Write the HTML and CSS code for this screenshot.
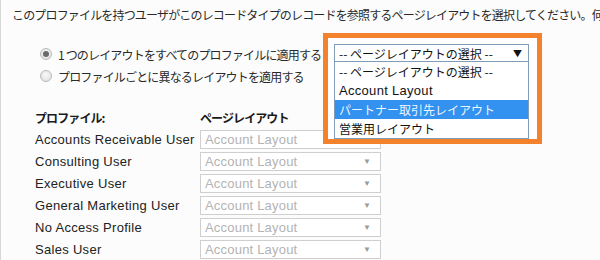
FILE: index.html
```html
<!DOCTYPE html>
<html lang="ja">
<head>
<meta charset="utf-8">
<link rel="stylesheet" href="styles.css">
</head>
<body>
<div class="page">
  <p class="intro">このプロファイルを持つユーザがこのレコードタイプのレコードを参照するページレイアウトを選択してください。何も選択しない場合は</p>

  <div class="choices">
    <div class="choice"><span class="radio checked"></span><span>1 つのレイアウトをすべてのプロファイルに適用する</span></div>
    <div class="choice"><span class="radio"></span><span>プロファイルごとに異なるレイアウトを適用する</span></div>
  </div>

  <div class="grid">
    <div class="head">プロファイル:</div>
    <div class="head">ページレイアウト</div>

    <div class="label">Accounts Receivable User</div>
    <div class="sel"><span>Account Layout</span><span class="arr">▼</span></div>
    <div class="label">Consulting User</div>
    <div class="sel"><span>Account Layout</span><span class="arr">▼</span></div>
    <div class="label">Executive User</div>
    <div class="sel"><span>Account Layout</span><span class="arr">▼</span></div>
    <div class="label">General Marketing User</div>
    <div class="sel"><span>Account Layout</span><span class="arr">▼</span></div>
    <div class="label">No Access Profile</div>
    <div class="sel"><span>Account Layout</span><span class="arr">▼</span></div>
    <div class="label">Sales User</div>
    <div class="sel"><span>Account Layout</span><span class="arr">▼</span></div>
  </div>

  <div class="dropdown">
    <div class="closed"><span>-- ページレイアウトの選択 --</span><span class="arr-dark">▼</span></div>
    <ul class="list">
      <li>-- ページレイアウトの選択 --</li>
      <li class="latin">Account Layout</li>
      <li class="active">パートナー取引先レイアウト</li>
      <li>営業用レイアウト</li>
    </ul>
  </div>
</div>
</body>
</html>
```

FILE: styles.css
```css
* { box-sizing: border-box; }
html, body { margin: 0; padding: 0; }
body {
  width: 600px;
  height: 260px;
  overflow: hidden;
  background: #fcfcfc;
  font-family: "Liberation Sans", "Noto Sans CJK JP", sans-serif;
  color: #222;
}
.page {
  position: relative;
  height: 260px;
  border-left: 1px solid #d8d8d8;
  padding: 6px 0 0 11px;
}
.intro {
  margin: 0;
  font-family: "Noto Sans CJK JP", sans-serif;
  font-size: 12px;
  letter-spacing: -0.83px;
  line-height: 18px;
  white-space: nowrap;
  overflow: hidden;
  color: #2a2a2a;
}
.choices {
  margin: 19px 0 0 28px;
  display: flex;
  flex-direction: column;
}
.choice {
  display: flex;
  align-items: center;
  height: 22px;
  font-family: "Noto Sans CJK JP", sans-serif;
  font-size: 12px;
  letter-spacing: -0.83px;
  color: #2a2a2a;
  white-space: nowrap;
}
.radio {
  width: 12px;
  height: 12px;
  border-radius: 50%;
  border: 1px solid #b9b9b9;
  background: radial-gradient(circle at 50% 40%, #fafafa, #dcdcdc);
  margin-right: 6px;
  flex: none;
  display: flex;
  align-items: center;
  justify-content: center;
}
.radio.checked::after {
  content: "";
  width: 6px;
  height: 6px;
  border-radius: 50%;
  background: #6a6a6a;
}
.grid {
  margin: 21px 0 0 23px;
  display: grid;
  grid-template-columns: 165px 181px;
  grid-template-rows: 20px;
  grid-auto-rows: 22px;
  align-items: center;
}
.head {
  font-family: "Noto Sans CJK JP", sans-serif;
  font-weight: bold;
  font-size: 12px;
  letter-spacing: -0.9px;
  color: #1a1a1a;
  height: 20px;
  line-height: 20px;
}
.label {
  font-size: 13px;
  letter-spacing: 0.3px;
  color: #222;
  white-space: nowrap;
  align-self: center;
}
.sel {
  height: 19px;
  border: 1px solid #cfcfcf;
  background: #fff;
  display: flex;
  align-items: center;
  justify-content: space-between;
  padding: 0 9px 0 4px;
  font-size: 13px;
  letter-spacing: 0.2px;
  color: #b3b3b3;
}
.arr {
  font-size: 8px;
  color: #9a9a9a;
}
.dropdown {
  position: absolute;
  left: 322px;
  top: 33px;
  width: 219px;
  height: 111px;
  border: 5px solid #f4822c;
  background: #fff;
  padding: 6px 8px 0 6px;
}
.closed {
  height: 18px;
  border: 1px solid #7f9db9;
  display: flex;
  align-items: center;
  justify-content: space-between;
  padding: 0 6px 0 4px;
  font-family: "Noto Sans CJK JP", sans-serif;
  font-size: 12px;
  color: #111;
  white-space: nowrap;
}
.arr-dark {
  font-size: 9px;
  color: #111;
}
.list {
  list-style: none;
  margin: 0;
  padding: 0;
  border: 1px solid #7f9db9;
  border-top: none;
}
.list li {
  height: 19px;
  line-height: 19px;
  padding-left: 4px;
  font-family: "Noto Sans CJK JP", sans-serif;
  font-size: 12px;
  color: #111;
  white-space: nowrap;
}
.list li.latin {
  font-family: "Liberation Sans", sans-serif;
  font-size: 13px;
  letter-spacing: 0.3px;
}
.list li.active {
  background: #3391f0;
  color: #eef6ff;
}
```
